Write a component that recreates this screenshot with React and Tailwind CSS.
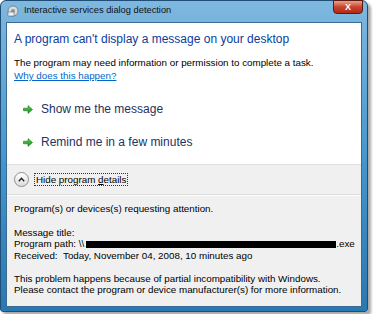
import React from 'react';

const FONT = { fontFamily: '"Liberation Sans", Arial, sans-serif' };

function GreenArrow() {
  return (
    <svg width="10" height="9" viewBox="0 0 10 9" className="shrink-0">
      <defs>
        <linearGradient id="ga" x1="0" y1="0" x2="0" y2="1">
          <stop offset="0" stopColor="#5fd05f" />
          <stop offset="1" stopColor="#1c8a1c" />
        </linearGradient>
      </defs>
      <path d="M0.5 3.2 H5 V0.6 L9.5 4.5 L5 8.4 V5.8 H0.5 Z" fill="url(#ga)" stroke="#1a7a1a" strokeWidth="0.6" />
    </svg>
  );
}

function AppIcon() {
  return (
    <svg width="12" height="12" viewBox="0 0 12 12" className="shrink-0">
      <circle cx="6" cy="6" r="5" fill="#d8dde2" stroke="#6b7680" strokeWidth="0.8" />
      <circle cx="6" cy="6" r="2" fill="#8a949c" />
      <rect x="1" y="7" width="6" height="4" rx="0.5" fill="#eef1f3" stroke="#5a646c" strokeWidth="0.6" />
    </svg>
  );
}

export default function App() {
  return (
    <div className="w-[373px] h-[314px] bg-white" style={FONT}>
      <div className="w-[368px] h-[312px] rounded-t-[6px] rounded-b-[3px] border border-[#1f4f78] bg-gradient-to-b from-[#7fb8df] via-[#4597cd] to-[#2a78b0] shadow-[3px_3px_3px_rgba(0,0,0,0.35)] flex flex-col">
        {/* title bar */}
        <div className="h-[21px] flex items-start justify-between pl-[6px] pr-[4px]">
          <div className="flex items-center gap-[5px] pt-[4px]">
            <AppIcon />
            <span className="text-[9.3px] text-[#111] leading-none">Interactive services dialog detection</span>
          </div>
          <div className="w-[30px] h-[14px] -mt-px rounded-b-[4px] border border-[#5a1a10] bg-gradient-to-b from-[#e8a090] via-[#c8432c] to-[#b02a18] flex items-center justify-center">
            <span className="text-white text-[9px] font-bold leading-none">X</span>
          </div>
        </div>
        {/* client area */}
        <div className="mx-[5px] mb-[4px] flex-1 border border-[#3b6a92] bg-[#f0f0f0] flex flex-col">
          <div className="bg-white h-[142px] pl-[7px] pt-[8px] border-b border-[#dfdfdf]">
            <div className="text-[12px] text-[#0b3c9c] leading-[16px]">A program can't display a message on your desktop</div>
            <div className="mt-[9px] text-[9.8px] text-black leading-[13px]">The program may need information or permission to complete a task.</div>
            <div className="text-[9.8px] text-[#0066cc] underline leading-[13px]">Why does this happen?</div>
            <div className="mt-[19px] flex items-center gap-[8px] pl-[9px] h-[16px]">
              <GreenArrow />
              <span className="text-[12px] text-[#1b3363] leading-none">Show me the message</span>
            </div>
            <div className="mt-[17px] flex items-center gap-[8px] pl-[9px] h-[16px]">
              <GreenArrow />
              <span className="text-[12px] text-[#1b3363] leading-none">Remind me in a few minutes</span>
            </div>
          </div>
          <div className="h-[30px] flex items-center pl-[7px] gap-[5px] border-b border-[#dcdcdc] shadow-[0_1px_0_#fff]">
            <div className="w-[15px] h-[15px] rounded-full border border-[#8f8f8f] bg-gradient-to-b from-white to-[#dcdcdc] flex items-center justify-center">
              <svg width="7" height="5" viewBox="0 0 7 5">
                <path d="M0.8 4.2 L3.5 1.3 L6.2 4.2" fill="none" stroke="#222" strokeWidth="1.4" />
              </svg>
            </div>
            <span className="text-[9.8px] text-black leading-[11px] px-px border border-dotted border-[#333]">
              Hide program <span className="underline">d</span>etails
            </span>
          </div>
          <div className="pl-[7px] pt-[8px] text-[9.8px] text-black leading-[11.5px]">
            <div>Program(s) or devices(s) requesting attention.</div>
            <div className="mt-[12px]">Message title:</div>
            <div className="flex items-center h-[12px]">
              <span>Program path:&nbsp;\\</span>
              <span className="inline-block w-[250px] h-[7px] bg-black ml-[2px]" />
              <span>.exe</span>
            </div>
            <div>Received:&nbsp;&nbsp;Today, November 04, 2008, 10 minutes ago</div>
            <div className="mt-[11px]">This problem happens because of partial incompatibility with Windows.</div>
            <div>Please contact the program or device manufacturer(s) for more information.</div>
          </div>
        </div>
      </div>
    </div>
  );
}
